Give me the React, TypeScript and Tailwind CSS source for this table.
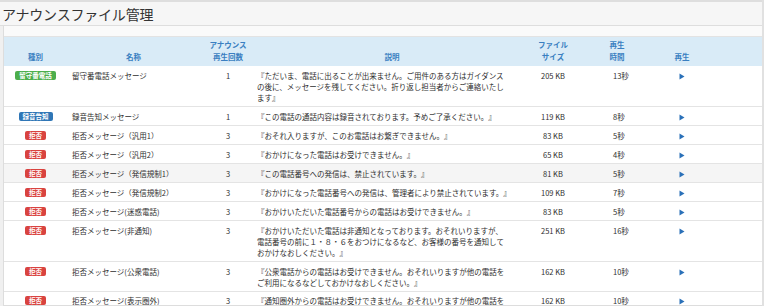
const rows = [
  {
    kind: '留守番電話',
    badge: 'bg-[#4cae4c]',
    name: '留守番電話メッセージ',
    count: 1,
    desc: [
      '『ただいま、電話に出ることが出来ません。ご用件のある方はガイダンス',
      'の後に、メッセージを残してください。折り返し担当者からご連絡いたし',
      'ます』',
    ],
    size: '205 KB',
    time: '13秒',
  },
  {
    kind: '録音告知',
    badge: 'bg-[#2f76b6]',
    name: '録音告知メッセージ',
    count: 1,
    desc: ['『この電話の通話内容は録音されております。予めご了承ください。』'],
    size: '119 KB',
    time: '8秒',
  },
  { kind: '拒否', badge: 'bg-[#d9433f]', name: '拒否メッセージ（汎用1）', count: 3, desc: ['『おそれ入りますが、このお電話はお繋ぎできません。』'], size: '83 KB', time: '5秒' },
  { kind: '拒否', badge: 'bg-[#d9433f]', name: '拒否メッセージ（汎用2）', count: 3, desc: ['『おかけになった電話はお受けできません。』'], size: '65 KB', time: '4秒' },
  { kind: '拒否', badge: 'bg-[#d9433f]', name: '拒否メッセージ（発信規制1）', count: 3, desc: ['『この電話番号への発信は、禁止されています。』'], size: '81 KB', time: '5秒', shade: true },
  { kind: '拒否', badge: 'bg-[#d9433f]', name: '拒否メッセージ（発信規制2）', count: 3, desc: ['『おかけになった電話番号への発信は、管理者により禁止されています。』'], size: '109 KB', time: '7秒' },
  { kind: '拒否', badge: 'bg-[#d9433f]', name: '拒否メッセージ(迷惑電話)', count: 3, desc: ['『おかけいただいた電話番号からの電話はお受けできません。』'], size: '83 KB', time: '5秒' },
  {
    kind: '拒否',
    badge: 'bg-[#d9433f]',
    name: '拒否メッセージ(非通知)',
    count: 3,
    desc: [
      '『おかけいただいた電話は非通知となっております。おそれいりますが、',
      '電話番号の前に１・８・６をおつけになるなど、お客様の番号を通知して',
      'おかけなおしください。』',
    ],
    size: '251 KB',
    time: '16秒',
  },
  {
    kind: '拒否',
    badge: 'bg-[#d9433f]',
    name: '拒否メッセージ(公衆電話)',
    count: 3,
    desc: ['『公衆電話からの電話はお受けできません。おそれいりますが他の電話を', 'ご利用になるなどしておかけなおしください。』'],
    size: '162 KB',
    time: '10秒',
  },
  {
    // only the first line is in view at the bottom edge
    kind: '拒否',
    badge: 'bg-[#d9433f]',
    name: '拒否メッセージ(表示圏外)',
    count: 3,
    desc: ['『通知圏外からの電話はお受けできません。おそれいりますが他の電話を'],
    size: '162 KB',
    time: '10秒',
    last: true,
  },
];

function PlayIcon() {
  return (
    <svg width="6" height="7" viewBox="0 0 6 7" className="inline-block">
      <path d="M0.5 0.5 L5.5 3.5 L0.5 6.5 Z" fill="#2a70b8" />
    </svg>
  );
}

const th = 'align-bottom text-center font-bold text-[#3a7fc1] leading-[12px] pt-[2px] pb-[3px]';

export default function App() {
  return (
    <div className="w-[765px] h-[308px] overflow-hidden bg-white text-[#2e2e2e] [text-spacing-trim:space-all] font-['Noto_Sans_CJK_JP','Noto_Sans',sans-serif]">
      <div className="mr-[1px] border-r-2 border-[#e1e1e1]">
        <div className="h-[26px] border-t-2 border-b border-[#dedede] bg-[#f6f6f6] flex items-center pl-[2px]">
          <h1 className="text-[14px] leading-[16px] text-[#333] tracking-[-0.2px]">アナウンスファイル管理</h1>
        </div>
        <div className="flex h-[280px]">
          <div className="w-[3px] bg-[#f0f0f0]" />
          <div className="flex-1 border-l border-b border-[#dddddd] overflow-hidden">
            <div className="h-[11px] bg-[#fafafa] border-b border-[#e3e3e3]" />
            <table className="table-fixed border-collapse w-[758px] text-[7.5px]">
              <colgroup>
                <col className="w-[63px]" />
                <col className="w-[133px]" />
                <col className="w-[56px]" />
                <col className="w-[272px]" />
                <col className="w-[50px]" />
                <col className="w-[78px]" />
                <col className="w-[52px]" />
                <col className="w-[54px]" />
              </colgroup>
              <thead>
                <tr className="bg-[#d9ebf7] h-[29px]">
                  <th className={th}>種別</th>
                  <th className={th}>名称</th>
                  <th className={th}>
                    アナウンス
                    <br />
                    再生回数
                  </th>
                  <th className={th}>説明</th>
                  <th className={th}>
                    ファイル
                    <br />
                    サイズ
                  </th>
                  <th className={th}>
                    再生
                    <br />
                    時間
                  </th>
                  <th className={th}>再生</th>
                  <th className={th}></th>
                </tr>
              </thead>
              <tbody>
                {rows.map((r, i) => {
                  const td = r.last ? 'align-top pt-[4px] leading-[9px]' : 'align-top pt-[4px] pb-[3px] leading-[11px]';
                  return (
                    <tr key={i} className={`border-b border-[#e4e4e4] ${r.shade ? 'bg-[#f5f5f5]' : 'bg-white'}`}>
                      <td className={td}>
                        <div className={`flex justify-center ${r.last ? '' : 'pt-[1px]'}`}>
                          <span className={`${r.badge} text-white font-bold text-[6.5px] leading-[9px] h-[9px] px-[4px] rounded-[2px]`}>
                            {r.kind}
                          </span>
                        </div>
                      </td>
                      <td className={`${td} pl-[5px]`}>{r.name}</td>
                      <td className={`${td} text-center`}>{r.count}</td>
                      <td className={`${td} pl-[1px] whitespace-nowrap`}>
                        {r.desc.map((line, j) => (
                          <div key={j}>{line}</div>
                        ))}
                      </td>
                      <td className={`${td} text-center`}>{r.size}</td>
                      <td className={`${td} pl-[35px]`}>{r.time}</td>
                      <td className={`${td} text-center`}>
                        <PlayIcon />
                      </td>
                      <td className={td}></td>
                    </tr>
                  );
                })}
              </tbody>
            </table>
          </div>
        </div>
      </div>
    </div>
  );
}
